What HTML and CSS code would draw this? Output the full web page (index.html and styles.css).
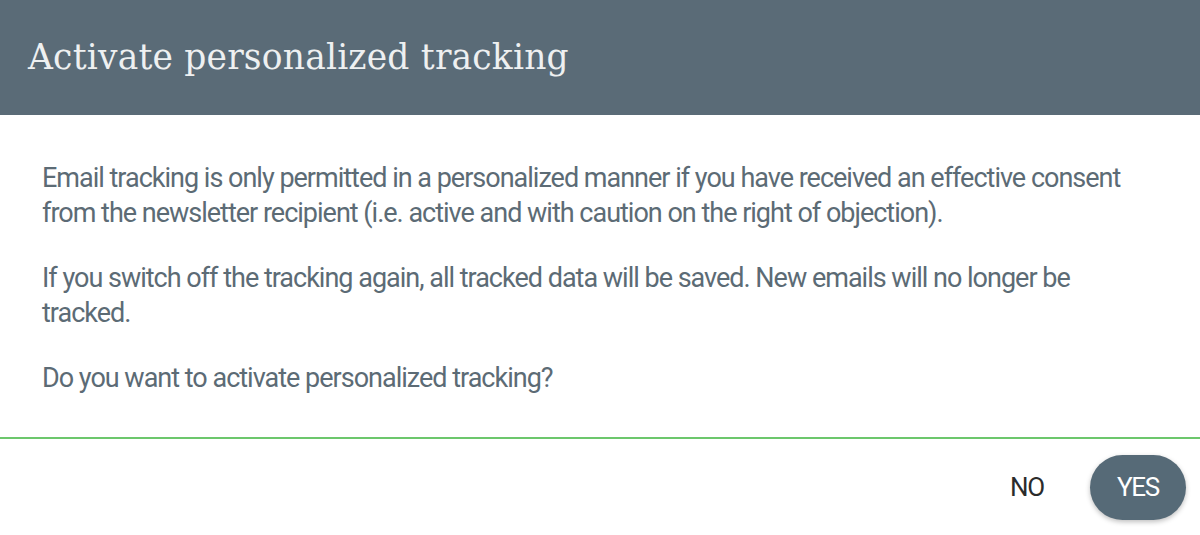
FILE: index.html
```html
<!DOCTYPE html>
<html lang="en">
<head>
    <meta charset="UTF-8">
    <meta name="viewport" content="width=device-width, initial-scale=1.0">
    <title>Activate personalized tracking</title>
    <link rel="stylesheet" href="styles.css">
</head>
<body>
    <div class="dialog">
        <header class="dialog-header">
            <h1>Activate personalized tracking</h1>
        </header>

        <div class="dialog-content">
            <p>Email tracking is only permitted in a personalized manner if you have received an effective consent from the newsletter recipient (i.e. active and with caution on the right of objection).</p>
            <p>If you switch off the tracking again, all tracked data will be saved. New emails will no longer be tracked.</p>
            <p>Do you want to activate personalized tracking?</p>
        </div>

        <div class="dialog-actions">
            <button class="btn-flat">NO</button>
            <button class="btn-raised">YES</button>
        </div>
    </div>
</body>
</html>
```

FILE: styles.css
```css
body {
    margin: 0;
    background-color: #ffffff;
    font-family: Roboto, "Noto Sans", sans-serif;
}
.dialog {
    width: 1200px;
    height: 535px;
    display: flex;
    flex-direction: column;
}
.dialog-header {
    height: 115px;
    flex-shrink: 0;
    background-color: #5a6b77;
    display: flex;
    align-items: center;
    padding-left: 28px;
    box-sizing: border-box;
}
.dialog-header h1 {
    margin: 0;
    font-family: "DejaVu Serif", "Liberation Serif", serif;
    font-weight: normal;
    font-size: 34.5px;
    letter-spacing: 0.2px;
    color: #eef0f1;
    padding-bottom: 2px;
}
.dialog-content {
    padding: 46px 58px 41px 42px;
    border-bottom: 2px solid #6cc76c;
}
.dialog-content p {
    margin: 0 0 30px 0;
    font-size: 27px;
    line-height: 35px;
    letter-spacing: -1px;
    color: #5c6b75;
}
.dialog-content p:last-child {
    margin-bottom: 0;
}
.dialog-actions {
    flex: 1;
    display: flex;
    justify-content: flex-end;
    align-items: center;
    padding-right: 14px;
    gap: 38px;
}
.btn-flat {
    background: none;
    border: none;
    font-family: Roboto, sans-serif;
    font-size: 26px;
    letter-spacing: -1.2px;
    color: #2b2b2b;
    padding: 10px 8px;
    cursor: pointer;
}
.btn-raised {
    width: 96px;
    height: 65px;
    border: none;
    border-radius: 33px;
    background-color: #566a77;
    color: #ffffff;
    font-family: Roboto, sans-serif;
    font-size: 26px;
    letter-spacing: -1.2px;
    box-shadow: 0 2px 5px rgba(0, 0, 0, 0.25);
    cursor: pointer;
}
```
